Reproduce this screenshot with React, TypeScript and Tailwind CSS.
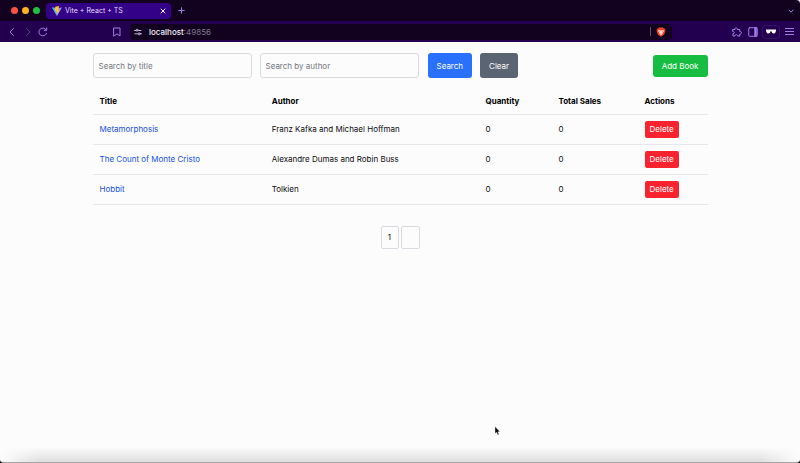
import type { ReactNode } from "react";

type Book = { title: string; author: string; quantity: number; sales: number };

const books: Book[] = [
  { title: "Metamorphosis", author: "Franz Kafka and Michael Hoffman", quantity: 0, sales: 0 },
  { title: "The Count of Monte Cristo", author: "Alexandre Dumas and Robin Buss", quantity: 0, sales: 0 },
  { title: "Hobbit", author: "Tolkien", quantity: 0, sales: 0 },
];

function IconButton({ label, className = "", children }: { label: string; className?: string; children: ReactNode }) {
  return (
    <button type="button" aria-label={label} className={`flex shrink-0 items-center justify-center ${className}`}>
      {children}
    </button>
  );
}

const line = {
  fill: "none",
  stroke: "currentColor",
  strokeLinecap: "round" as const,
  strokeLinejoin: "round" as const,
};

function ViteLogo() {
  return (
    <svg width="10" height="10" viewBox="0 0 20 20" aria-hidden="true">
      <path d="M0 3 L10 20 L20 3 L10 4.500 Z" fill="#9a8cf5" />
      <path d="M0 3 L10 20 L8 4 Z" fill="#49b6ee" />
      <path d="M14 0 L6.500 1.500 L6 10 L9 9.500 L8.500 13.500 L11 12.500 L10.500 17 L15.500 8 L12.500 8.500 Z" fill="#ffc42b" />
    </svg>
  );
}

function BraveLogo() {
  return (
    <svg width="10" height="10" viewBox="0 0 20 20" aria-hidden="true">
      <path d="M6 1 H14 L16 3 L18 3.500 L19 7 L16.500 15 L10 19.500 L3.500 15 L1 7 L2 3.500 L4 3 Z" fill="#ee4323" />
      <path d="M6 6 L8.500 7 H11.500 L14 6 L16 8 L12.500 12 L13 13.500 L10 16 L7 13.500 L7.500 12 L4 8 Z" fill="#fff" />
      <path d="M5 7.500 L9 8.500 L8 10 Z M15 7.500 L11 8.500 L12 10 Z M10 10 L11 12.500 L10 14 L9 12.500 Z" fill="#ee4323" />
    </svg>
  );
}

function BrowserChrome() {
  return (
    <header className="text-[#a07ee8]">
      <div className="flex h-[21px] items-center rounded-tr-[4px] bg-[#12021f] pr-[5px]">
        <div className="flex gap-1 pl-[11px] pr-[6px]">
          <span className="size-[7px] rounded-full bg-[#fb5148]" />
          <span className="size-[7px] rounded-full bg-[#fdb225]" />
          <span className="size-[7px] rounded-full bg-[#1fc03f]" />
        </div>
        <div className="flex h-4 w-[125px] items-center rounded-[4px] bg-[#330088] pl-[6px] pr-1 text-[7px] text-[#e6dcfb]">
          <ViteLogo />
          <span className="ml-[3px] flex-1 whitespace-nowrap">Vite + React + TS</span>
          <IconButton label="Close tab" className="size-2 text-white">
            <svg width="6" height="6" viewBox="0 0 6 6" {...line}>
              <path d="M1 1 L5 5 M5 1 L1 5" />
            </svg>
          </IconButton>
        </div>
        <IconButton label="New tab" className="ml-[6px] size-2">
          <svg width="7" height="7" viewBox="0 0 7 7" {...line}>
            <path d="M3.500 .75 V6.250 M.75 3.500 H6.250" />
          </svg>
        </IconButton>
        <IconButton label="Search tabs" className="ml-auto size-2">
          <svg width="6" height="6" viewBox="0 0 6 6" {...line}>
            <path d="M1 2 L3 4.250 L5 2" />
          </svg>
        </IconButton>
      </div>

      <div className="flex h-[21px] items-center bg-[#22004f] pl-2 pr-[6px]">
        <IconButton label="Back" className="size-2">
          <svg width="8" height="10" viewBox="0 0 8 10" {...line}>
            <path d="M5.500 1.500 L2 5 L5.500 8.500" />
          </svg>
        </IconButton>
        <IconButton label="Forward" className="ml-2 size-2 text-[#5b3693]">
          <svg width="8" height="10" viewBox="0 0 8 10" {...line}>
            <path d="M2.500 1.500 L6 5 L2.500 8.500" />
          </svg>
        </IconButton>
        <IconButton label="Reload" className="ml-[6px] size-[10px]">
          <svg width="10" height="10" viewBox="0 0 10 10" {...line}>
            <path d="M8.500 6.400 A3.900 3.900 0 1 1 8.300 3.100 M8.700 .9 V3.300 H6.300" />
          </svg>
        </IconButton>
        <IconButton label="Bookmark" className="ml-16 size-[10px]">
          <svg width="8" height="10" viewBox="0 0 8 10" {...line}>
            <path d="M1 1 H7 V9 L4 6.800 L1 9 Z" />
          </svg>
        </IconButton>
        <div className="ml-2 flex h-4 min-w-0 flex-1 items-center rounded-[4px] bg-[#12021f] px-1 text-[8px]">
          <svg width="8" height="8" viewBox="0 0 8 8" {...line} className="text-[#c3b5da]" aria-hidden="true">
            <path d="M.5 2.500 H2 M4.500 2.500 H7 M.8 5.800 H3.500 M6.500 5.800 H7.500" />
            <circle cx="3" cy="2.200" r="1" />
            <circle cx="5.200" cy="5.800" r="1" />
          </svg>
          <span className="ml-[7px] flex-1 whitespace-nowrap text-[#82778f]">
            <span className="font-medium text-[#f2eef8]">localhost</span>:49856
          </span>
          <span className="mr-[5px] h-[9px] w-px bg-[#5b5365]" />
          <IconButton label="Brave Shields" className="mr-[2px] size-[10px]">
            <BraveLogo />
          </IconButton>
        </div>
        <IconButton label="Extensions" className="ml-[60px] size-[10px]">
          <svg width="10" height="10" viewBox="0 0 20 20" {...line} strokeWidth="2">
            <path d="M2 5 H6 C4.500 1 11 0 10.500 5 H15.500 V9 C20 8 20 15 15.500 14 V18 H11 C11 14 6 14 6 18 H2 V13 C6 13 6 9 2 9 Z" />
          </svg>
        </IconButton>
        <IconButton label="Sidebar" className="ml-[6px] size-[10px]">
          <svg width="10" height="10" viewBox="0 0 10 10" {...line}>
            <rect x=".75" y=".75" width="8.500" height="8.500" rx=".75" />
            <path d="M7.500 1 V9" strokeWidth="2.500" />
          </svg>
        </IconButton>
        <IconButton label="Private window" className="ml-1 h-[14px] w-[18px] rounded-[4px] border border-[#351563] text-white">
          <svg width="10" height="5" viewBox="0 0 10 5" fill="currentColor">
            <path d="M0 .5 H10 V1.500 L9.500 3.300 Q9.200 4.500 7.600 4.500 Q5.800 4.500 5.500 2.200 H4.500 Q4.200 4.500 2.400 4.500 Q.8 4.500 .5 3.300 L0 1.500 Z" />
          </svg>
        </IconButton>
        <IconButton label="Menu" className="ml-1 size-[10px]">
          <svg width="9" height="9" viewBox="0 0 9 9" {...line} strokeLinecap="butt">
            <path d="M0 1.500 H9 M0 4.500 H9 M0 7.500 H9" />
          </svg>
        </IconButton>
      </div>
    </header>
  );
}

function SearchBar() {
  const input =
    "h-[25px] w-[159px] min-w-0 rounded-[3px] border border-[#d9dbe0] bg-transparent px-[5px] placeholder:text-[#74777d]";
  return (
    <div className="flex items-center justify-between">
      <form className="flex gap-2" onSubmit={(e) => e.preventDefault()}>
        <input className={input} placeholder="Search by title" aria-label="Search by title" />
        <input className={input} placeholder="Search by author" aria-label="Search by author" />
        <button type="submit" className="ml-px h-[25px] rounded-[3px] bg-[#2970fd] px-[9px] text-white">
          Search
        </button>
        <button type="reset" className="h-[25px] rounded-[3px] bg-[#5b6472] px-[9px] text-white">
          Clear
        </button>
      </form>
      <button type="button" className="h-[22px] rounded-[3px] bg-[#16bd40] px-[9px] text-white">
        Add Book
      </button>
    </div>
  );
}

function BookTable() {
  return (
    <table className="mt-[10px] w-full table-fixed text-left">
      <colgroup>
        <col className="w-[28%]" />
        <col />
        <col className="w-[73px]" />
        <col className="w-[86px]" />
        <col className="w-[70px]" />
      </colgroup>
      <thead>
        <tr className="h-[26px] border-b border-[#e6e7ea] text-black">
          {["Title", "Author", "Quantity", "Total Sales", "Actions"].map((name) => (
            <th key={name} scope="col" className="px-[7px] font-bold">
              {name}
            </th>
          ))}
        </tr>
      </thead>
      <tbody>
        {books.map((book) => (
          <tr key={book.title} className="h-[30px] border-b border-[#e6e7ea]">
            <td className="px-[7px]">
              <a href="#" className="text-[#1650e0]">
                {book.title}
              </a>
            </td>
            <td className="px-[7px]">{book.author}</td>
            <td className="px-[7px]">{book.quantity}</td>
            <td className="px-[7px]">{book.sales}</td>
            <td className="px-[7px]">
              <button type="button" className="block h-[17px] rounded-[2px] bg-[#f9232f] px-[5px] text-white">
                Delete
              </button>
            </td>
          </tr>
        ))}
      </tbody>
    </table>
  );
}

export default function App() {
  return (
    <div className="relative flex min-h-screen flex-col bg-[#fcfcfc] font-['Inter',sans-serif] text-[8px] leading-3 text-[#0c0c0e]">
      <BrowserChrome />
      <main className="mx-auto w-full max-w-[615px] flex-1 pt-[11px]">
        <SearchBar />
        <BookTable />
        <nav aria-label="Pagination" className="mt-[21px] flex justify-center gap-[2px]">
          <button type="button" className="h-[23px] w-[18px] rounded-[2px] border border-[#d9dbe0]">
            1
          </button>
          <button type="button" aria-label="Next page" className="h-[23px] w-[19px] rounded-[2px] border border-[#d9dbe0]" />
        </nav>
      </main>
      <footer className="h-4 overflow-hidden bg-black">
        <div className="flex h-full justify-between overflow-hidden rounded-b-[4px] border-b border-[#a5a5a5] bg-linear-to-b from-[#fcfcfc] to-[#dedede]">
          <div className="h-full w-10 bg-linear-to-r from-[#fcfcfc] to-[#fcfcfc]/0" />
          <div className="h-full w-10 bg-linear-to-l from-[#fcfcfc] to-[#fcfcfc]/0" />
        </div>
      </footer>
      <svg className="absolute left-[494px] top-[426px]" width="7" height="10" viewBox="0 0 7 10" aria-hidden="true">
        <path d="M1 .5 V7.500 L2.600 6.200 L3.800 9 L5 8.500 L3.900 5.800 H6 Z" fill="#000" stroke="#fff" strokeWidth=".4" />
      </svg>
    </div>
  );
}
